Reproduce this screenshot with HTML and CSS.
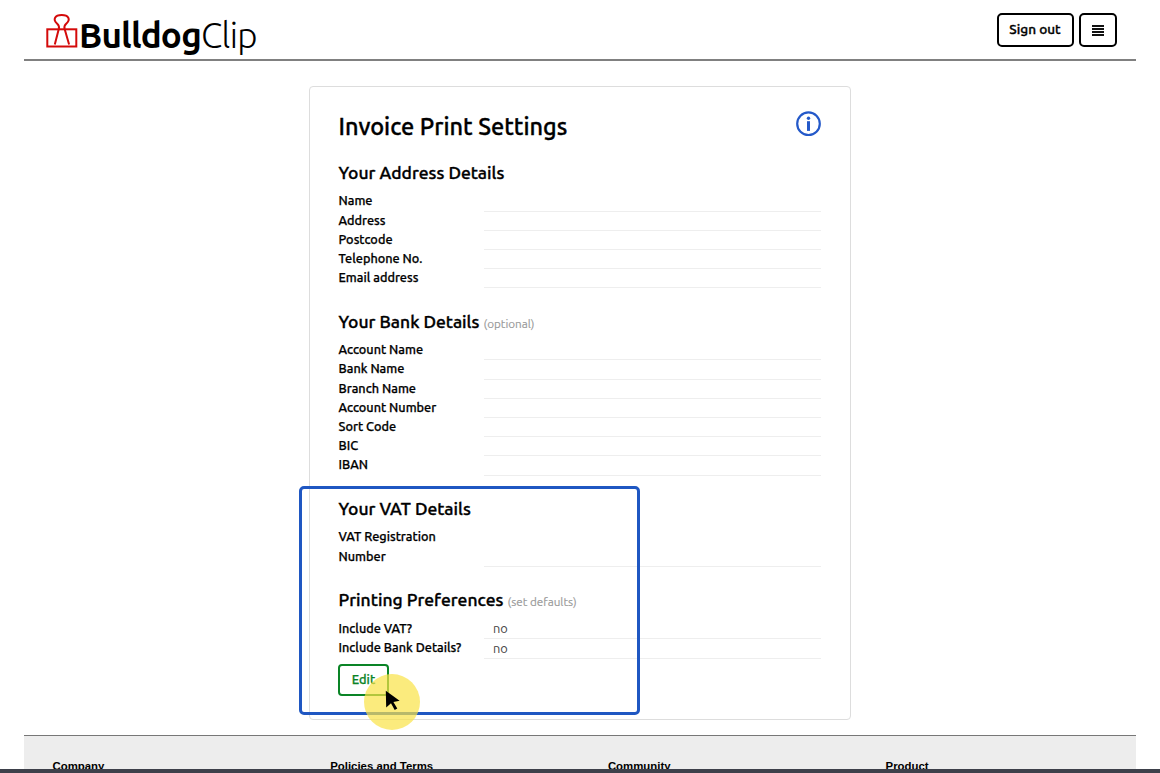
FILE: index.html
```html
<!DOCTYPE html>
<html lang="en">
<head>
<meta charset="utf-8">
<title>Invoice Print Settings</title>
<link rel="stylesheet" href="styles.css">
</head>
<body>
<div class="page">
  <header class="header">
    <div class="logo">
      <svg class="logo-mark" width="34" height="36" viewBox="0 0 34 36" fill="none" stroke="#d40a0a" stroke-width="2">
        <rect x="2.300" y="16.3" width="29" height="17.2"/>
        <path d="M9.800 31.500 L13.900 15.500 C14.400 13.300 13.900 12.200 12.200 10.700 C7.300 6.200 10 2 16.700 2 C23.400 2 26.100 6.200 21.200 10.700 C19.500 12.200 19 13.300 19.500 15.500 L24.100 31.500"/>
      </svg>
      <span class="logo-bold">Bulldog</span><span class="logo-light">Clip</span>
    </div>
    <nav class="actions">
      <button class="btn btn-signout">Sign out</button>
      <button class="btn btn-menu" aria-label="Menu">
        <svg width="12" height="11" viewBox="0 0 12 11" fill="#111"><path d="M0 0h12v1.900H0zM0 3h12v1.900H0zM0 6h12v1.900H0zM0 9h12v1.900H0z"/></svg>
      </button>
    </nav>
  </header>

  <main class="card">
    <div class="card-head">
      <h1>Invoice Print Settings</h1>
      <svg class="info" width="26" height="26" viewBox="0 0 26 26"><circle cx="13.500" cy="12.700" r="11.300" fill="none" stroke="#2459c9" stroke-width="2.200"/><circle cx="13.500" cy="7.300" r="1.700" fill="#2459c9"/><path d="M12 10.200h3v9.700h-3z" fill="#2459c9"/></svg>
    </div>

    <section class="section">
      <h2>Your Address Details</h2>
      <dl>
        <dt>Name</dt><dd></dd>
        <dt>Address</dt><dd></dd>
        <dt>Postcode</dt><dd></dd>
        <dt>Telephone No.</dt><dd></dd>
        <dt>Email address</dt><dd></dd>
      </dl>
    </section>

    <section class="section">
      <h2>Your Bank Details <small>(optional)</small></h2>
      <dl>
        <dt>Account Name</dt><dd></dd>
        <dt>Bank Name</dt><dd></dd>
        <dt>Branch Name</dt><dd></dd>
        <dt>Account Number</dt><dd></dd>
        <dt>Sort Code</dt><dd></dd>
        <dt>BIC</dt><dd></dd>
        <dt>IBAN</dt><dd></dd>
      </dl>
    </section>

    <section class="section section-vat">
      <h2>Your VAT Details</h2>
      <dl>
        <dt>VAT Registration<br>Number</dt><dd></dd>
      </dl>
    </section>

    <section class="section section-last">
      <h2>Printing Preferences <small>(set defaults)</small></h2>
      <dl class="filled">
        <dt>Include VAT?</dt><dd>no</dd>
        <dt>Include Bank Details?</dt><dd>no</dd>
      </dl>
    </section>
    <button class="btn-edit">Edit</button>
  </main>

  <footer class="footer">
    <div>Company</div><div>Policies and Terms</div><div>Community</div><div>Product</div>
  </footer>
</div>
<div class="bottom-edge"></div>
<div class="highlight"></div>
<div class="click-spot"></div>
<svg class="cursor" width="16" height="22" viewBox="0 0 16 22"><path d="M0.800 0.700 L14.600 10.800 L8.400 12 L12.300 18.600 L9.700 20 L6 13.200 L1.200 17.400Z" fill="#000"/></svg>
</body>
</html>
```
FILE: styles.css
```css
* { box-sizing: border-box; margin: 0; padding: 0; }
body {
  height: 773px;
  overflow: hidden;
  display: flex;
  flex-direction: column;
  background: #fff;
  color: #000;
  font-family: Ubuntu, "Noto Sans", sans-serif;
  font-size: 12.8px;
}
.page {
  width: 1112px;
  height: 769px;
  margin-left: 24px;
  overflow: hidden;
  display: flex;
  flex-direction: column;
  align-items: center;
}
.header {
  width: 100%;
  height: 61px;
  flex: none;
  display: flex;
  justify-content: space-between;
  padding: 13px 19.500px 0 21px;
  border-bottom: 2px solid #808080;
}
.logo { display: flex; height: 44px; line-height: 44px; white-space: nowrap; }
.logo-mark { flex: none; }
.logo-bold { font-size: 35px; font-weight: 700; width: 122px; letter-spacing: -0.800px; }
.logo-light { font-size: 35px; font-weight: 300; letter-spacing: -0.700px; }
.actions { display: flex; gap: 5px; }
button { background: #fff; font-family: inherit; }
.btn {
  height: 34px;
  border: 2px solid #000;
  border-radius: 5px;
  font-size: 13.600px;
  font-weight: 500;
  -webkit-text-stroke: 0.350px;
  display: flex;
  align-items: center;
  justify-content: center;
}
.btn-signout { width: 77px; padding-bottom: 2px; }
.btn-menu { width: 38px; }
.card {
  width: 542px;
  height: 634px;
  flex: none;
  margin-top: 25px;
  padding: 23px 29px 0 28.500px;
  border: 1px solid #ddd;
  border-radius: 4px;
}
.card-head { display: flex; justify-content: space-between; height: 46px; }
h1 { font-size: 23.500px; font-weight: 500; line-height: 32px; white-space: nowrap; -webkit-text-stroke: 0.350px; }
.info { flex: none; margin-top: 1px; }
h2 { font-size: 17.500px; font-weight: 500; line-height: 34px; height: 35.400px; white-space: nowrap; -webkit-text-stroke: 0.350px; }
small { font-size: 11.700px; font-weight: 400; color: #999; -webkit-text-stroke: 0.150px; }
.section { margin-bottom: 17.400px; }
dl { display: grid; grid-template-columns: 145.500px 1fr; }
dt { font-weight: 500; font-size: 12.700px; line-height: 19.200px; white-space: nowrap; -webkit-text-stroke: 0.250px; }
dd { border-bottom: 1px solid #eee; padding-left: 9px; color: #444; position: relative; top: 1px; }
.filled dd { line-height: 19.200px; height: 20.200px; top: 0; }
.filled dt { line-height: 19.200px; height: 19.200px; }
.filled dt:nth-of-type(2) { line-height: 17px; }
.section-last { margin-bottom: 5px; }
.btn-edit {
  width: 51px;
  height: 32px;
  margin-left: -0.500px;
  padding-bottom: 2px;
  border: 2px solid #0a8426;
  border-radius: 4px;
  color: #0a8426;
  font-size: 12.800px;
  font-weight: 500;
  -webkit-text-stroke: 0.250px;
}
.footer {
  width: 100%;
  height: 80px;
  flex: none;
  margin-top: 15px;
  padding: 22px 0 0 28.500px;
  background: #ededed;
  border-top: 1px solid #777;
  display: grid;
  grid-template-columns: repeat(4, 277.700px);
  font: bold 11.400px/16px "Liberation Sans", Arial, sans-serif;
}
.bottom-edge { height: 4px; background: #3d404a; }
.highlight {
  position: absolute;
  left: 299px;
  top: 486px;
  width: 341px;
  height: 229px;
  border: 3px solid #1f57c2;
  border-radius: 5px;
}
.click-spot {
  position: absolute;
  left: 364px;
  top: 674px;
  width: 56px;
  height: 56px;
  border-radius: 50%;
  background: rgba(250, 227, 70, 0.7);
}
.cursor { position: absolute; left: 385px; top: 690px; }
```
